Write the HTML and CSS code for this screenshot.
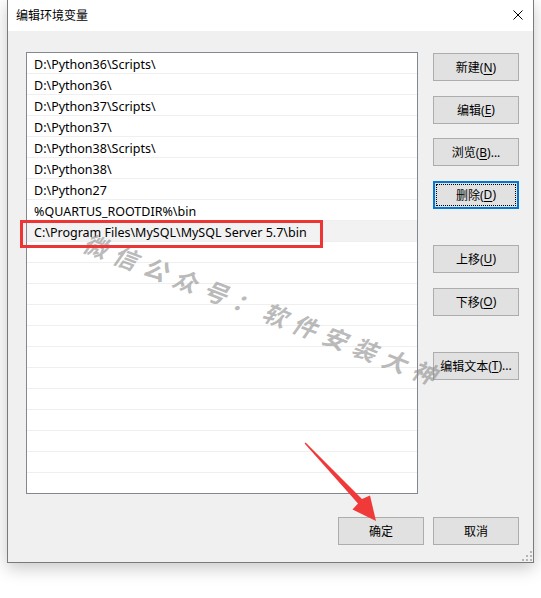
FILE: index.html
```html
<!DOCTYPE html>
<html lang="zh-CN">
	<head>
		<meta charset="UTF-8" />
		<title>编辑环境变量</title>
		<link rel="stylesheet" href="styles.css">
	</head>
	<body>
		<div class="window">
			<div class="titlebar">
				<span class="title">编辑环境变量</span>
				<svg class="close" width="10" height="10" viewBox="0 0 10 10">
					<path d="M0.5 0.5 L9.5 9.5 M9.5 0.5 L0.5 9.5" stroke="#000" stroke-width="1" />
				</svg>
			</div>
			<div class="client">
				<div class="main">
					<div class="list">
						<div class="row">D:\Python36\Scripts\</div>
						<div class="row">D:\Python36\</div>
						<div class="row">D:\Python37\Scripts\</div>
						<div class="row">D:\Python37\</div>
						<div class="row">D:\Python38\Scripts\</div>
						<div class="row">D:\Python38\</div>
						<div class="row">D:\Python27</div>
						<div class="row">%QUARTUS_ROOTDIR%\bin</div>
						<div class="row selected">C:\Program Files\MySQL\MySQL Server 5.7\bin</div>
						<div class="row"></div>
						<div class="row"></div>
						<div class="row"></div>
						<div class="row"></div>
						<div class="row"></div>
						<div class="row"></div>
						<div class="row"></div>
						<div class="row"></div>
						<div class="row"></div>
						<div class="row"></div>
						<div class="row"></div>
						<div class="row"></div>
					</div>
					<div class="side">
						<button class="btn">新建(<u>N</u>)</button>
						<button class="btn">编辑(<u>E</u>)</button>
						<button class="btn">浏览(<u>B</u>)...</button>
						<button class="btn focused"><span>删除(<u>D</u>)</span></button>
						<button class="btn sep">上移(<u>U</u>)</button>
						<button class="btn">下移(<u>O</u>)</button>
						<button class="btn sep">编辑文本(<u>T</u>)...</button>
					</div>
				</div>
				<div class="footer">
					<button class="btn">确定</button>
					<button class="btn">取消</button>
				</div>
				<svg class="grip" width="10" height="10" viewBox="0 0 10 10">
					<rect x="8" y="0" width="2" height="2" fill="#b5b5b5" />
					<rect x="4" y="4" width="2" height="2" fill="#b5b5b5" />
					<rect x="8" y="4" width="2" height="2" fill="#b5b5b5" />
					<rect x="0" y="8" width="2" height="2" fill="#b5b5b5" />
					<rect x="4" y="8" width="2" height="2" fill="#b5b5b5" />
					<rect x="8" y="8" width="2" height="2" fill="#b5b5b5" />
				</svg>
			</div>
		</div>

		<div class="watermark">微信公众号：软件安装大神</div>
		<div class="mark-box"></div>
		<svg class="arrow" width="80" height="86" viewBox="300 438 80 86">
			<polygon points="304.6,443.4 305.6,442.6 362,499 370,495.5 376,521 352.5,509.5 358,503.5" fill="#f03a3a" />
		</svg>
	</body>
</html>
```

FILE: styles.css
```css
* {
	margin: 0;
	padding: 0;
	box-sizing: border-box;
}

body {
	background: #fff;
	position: relative;
	width: 541px;
	height: 598px;
	overflow: hidden;
	font-family: "Noto Sans", "Noto Sans CJK SC", sans-serif;
	font-size: 12px;
	color: #000;
}

.window {
	position: relative;
	margin-left: 7px;
	width: 527px;
	height: 563px;
	border: 1px solid #7a7a7a;
	border-top: none;
	background: #f0f0f0;
	box-shadow: 0 5px 16px rgba(0, 0, 0, 0.22);
}

.titlebar {
	height: 31px;
	background: #fff;
	display: flex;
	align-items: center;
	justify-content: space-between;
	padding: 0 10px 1px 8px;
}

.title {
	font-family: "Noto Sans CJK SC", sans-serif;
	font-size: 12px;
	line-height: 14px;
}

.client {
	height: 531px;
	padding: 21px 14px 16px 18px;
	display: flex;
	flex-direction: column;
}

.main {
	display: flex;
	gap: 15px;
}

.list {
	width: 392px;
	height: 442px;
	background: #fff;
	border: 1px solid #828790;
	overflow: hidden;
}

.row {
	height: 21px;
	padding: 2px 0 0 7px;
	line-height: 19px;
	font-size: 12.5px;
	border-bottom: 1px solid #efefef;
	white-space: nowrap;
}

.row.selected {
	background: #f2f2f2;
}

.side {
	display: flex;
	flex-direction: column;
	gap: 14.67px;
	padding-top: 1px;
}

.btn {
	width: 86px;
	height: 28px;
	background: #e1e1e1;
	border: 1px solid #adadad;
	font-family: "Noto Sans", "Noto Sans CJK SC", sans-serif;
	font-size: 12px;
	color: #000;
	display: flex;
	align-items: center;
	justify-content: center;
}

.btn u {
	text-underline-offset: 2px;
}

.btn.sep {
	margin-top: 21.33px;
}

.btn.focused {
	border: 2px solid #0078d7;
	padding: 1px;
}

.btn.focused span {
	width: 100%;
	height: 100%;
	border: 1px dotted #000;
	display: flex;
	align-items: center;
	justify-content: center;
}

.footer {
	margin-top: 23px;
	display: flex;
	justify-content: flex-end;
	gap: 9px;
}

.grip {
	position: absolute;
	right: 1px;
	bottom: 1px;
}

.watermark {
	position: absolute;
	left: 72px;
	top: 294px;
	width: 384px;
	height: 32px;
	line-height: 32px;
	font-family: "Noto Sans CJK SC", sans-serif;
	font-size: 24px;
	font-weight: bold;
	font-style: italic;
	letter-spacing: 8px;
	color: rgba(140, 140, 140, 0.6);
	white-space: nowrap;
	transform: rotate(21deg);
	transform-origin: center;
}

.mark-box {
	position: absolute;
	left: 20px;
	top: 220px;
	width: 303px;
	height: 28px;
	border: 3px solid #ee3535;
}

.arrow {
	position: absolute;
	left: 300px;
	top: 438px;
}
```
